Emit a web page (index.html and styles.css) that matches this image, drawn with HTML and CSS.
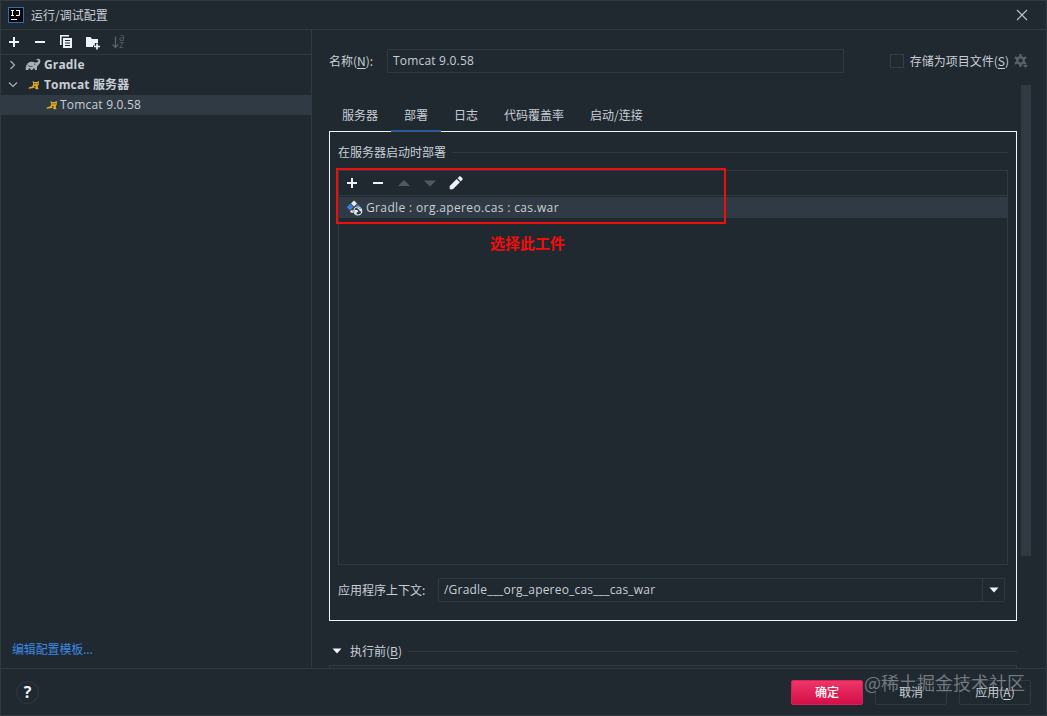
FILE: index.html
```html
<!DOCTYPE html>
<html lang="zh-CN">

<head>
    <meta charset="UTF-8">
    <meta name="viewport" content="width=device-width, initial-scale=1.0">
    <title>运行/调试配置</title>
    <link rel="stylesheet" href="styles.css">
</head>

<body>
    <div class="dialog">
        <header class="titlebar">
            <svg class="logo" width="16" height="16" viewBox="0 0 16 16">
                <rect x="0.5" y="0.5" width="15" height="15" fill="#050505" stroke="#2b6fc2"/>
                <path d="M3 3.5h3M4.5 3.5v5M3 8.5h3M8 3.5h3.5v4q0 1-1 1H8M3 12.5h6" fill="none" stroke="#fff" stroke-width="1.1"/>
            </svg>
            <span class="title">运行/调试配置</span>
            <svg class="close" width="12" height="12" viewBox="0 0 12 12">
                <path d="M1 1l10 10M11 1L1 11" stroke="#bfc3c8" stroke-width="1.1"/>
            </svg>
        </header>

        <div class="main">
            <!-- Configuration tree -->
            <aside class="sidebar">
                <div class="toolbar">
                    <svg width="16" height="16" viewBox="0 0 16 16"><path d="M8 3v10M3 8h10" stroke="#eef3fa" stroke-width="2"/></svg>
                    <svg width="16" height="16" viewBox="0 0 16 16"><path d="M3 8h10" stroke="#eef3fa" stroke-width="2"/></svg>
                    <svg width="16" height="16" viewBox="0 0 16 16">
                        <path d="M2.800 11V1.800H11" fill="none" stroke="#eef3fa" stroke-width="1.600"/>
                        <path d="M5 4h9v10H5z" fill="#eef3fa"/>
                        <path d="M7 6.500h5M7 9h5M7 11.500h5" stroke="#202830"/>
                    </svg>
                    <svg width="16" height="16" viewBox="0 0 16 16">
                        <path d="M2 3h4.500l1.500 2h6v4h-3.200v2.500H9V13H2z" fill="#eef3fa"/>
                        <path d="M13 9.500v6M10 12.500h6" stroke="#eef3fa" stroke-width="1.700"/>
                    </svg>
                    <span class="sort">
                        <svg width="7" height="14" viewBox="0 0 7 14"><path d="M3.5 1.5v11M.7 9.5l2.8 3 2.8-3" fill="none" stroke="#59616a" stroke-width="1.3"/></svg>
                        <span class="sort-letters"><span>a</span><span>z</span></span>
                    </span>
                </div>
                <div class="tree">
                    <div class="tree-row group">
                        <svg class="arrow" width="12" height="12" viewBox="0 0 12 12"><path d="M4.500 2l4 4-4 4" fill="none" stroke="#a9afb6" stroke-width="1.2"/></svg>
                        <svg class="gradle" width="16" height="14" viewBox="0 0 16 14">
                            <path d="M.7 12C.4 8.5 1.6 5.5 4.2 4.3c2-.9 4.200-.5 6 .1 1.700.5 3-.2 3.200-1.300.1-.8-.7-1.200-1.400-.8l-.7-1C12.900.2 15.300.7 15.400 2.900c.1 2.300-1.700 3.400-2.700 4.600-.7.9-.8 2.500-.8 4.500H10c0-1.100-.5-1.800-1.200-1.800S7.600 10.900 7.600 12H5.800c0-1.100-.5-1.800-1.200-1.800S3.300 10.900 3.300 12z" fill="#abb1b8"/>
                            <path d="M2.600 6.900l2 1.600 3-.2" fill="none" stroke="#202830" stroke-width=".7"/>
                            <circle cx="9.700" cy="6.200" r=".6" fill="#202830"/>
                        </svg>
                        <span>Gradle</span>
                    </div>
                    <div class="tree-row group">
                        <svg class="arrow" width="12" height="12" viewBox="0 0 12 12"><path d="M3 3.500l4 4 4-4" fill="none" stroke="#a9afb6" stroke-width="1.2"/></svg>
                        <svg class="tomcat" width="12" height="10" viewBox="0 0 12 10">
                            <path d="M4.500 1l1.800 1.100h2.500L11 1l-.3 3.800-1 1.700.8 2.700H7.800L6.500 7.600 4.500 8.200.5 8.800 1 7.200l3-.7 1.200-2z" fill="#dca928"/>
                            <path d="M6.300 3.800h1.200M8.700 3.800h1M6 6.300l2 .8" stroke="#38290f" stroke-width=".9"/>
                        </svg>
                        <span>Tomcat 服务器</span>
                    </div>
                    <div class="tree-row child selected">
                        <svg class="tomcat" width="12" height="10" viewBox="0 0 12 10">
                            <path d="M4.500 1l1.800 1.100h2.500L11 1l-.3 3.800-1 1.700.8 2.700H7.800L6.500 7.600 4.500 8.200.5 8.800 1 7.200l3-.7 1.200-2z" fill="#dca928"/>
                            <path d="M6.300 3.800h1.200M8.700 3.800h1M6 6.300l2 .8" stroke="#38290f" stroke-width=".9"/>
                        </svg>
                        <span class="latin">Tomcat 9.0.58</span>
                    </div>
                </div>
                <a class="templates">编辑配置模板...</a>
            </aside>

            <!-- Settings of the selected configuration -->
            <section class="settings">
                <div class="name-row">
                    <label class="name-label">名称(<u>N</u>):</label>
                    <div class="field latin">Tomcat 9.0.58</div>
                    <span class="checkbox"></span>
                    <label>存储为项目文件(<u>S</u>)</label>
                    <svg class="gear" width="14" height="14" viewBox="0 0 14 14">
                        <circle cx="6.500" cy="6.500" r="3.300" fill="none" stroke="#59616a" stroke-width="2.400"/>
                        <path d="M6.500 0v2.500M6.500 10.500V13M.9 3.200L3 4.500M10 8.500l2.100 1.300M.9 9.800L3 8.500M10 4.500l2.100-1.300" stroke="#59616a" stroke-width="2.300"/>
                        <path d="M9 11h5l-2.500 3z" fill="#59616a"/>
                    </svg>
                </div>

                <nav class="tabs">
                    <span class="tab">服务器</span>
                    <span class="tab active">部署</span>
                    <span class="tab">日志</span>
                    <span class="tab">代码覆盖率</span>
                    <span class="tab">启动/连接</span>
                </nav>

                <div class="panel">
                    <div class="section-title deploy-title"><span>在服务器启动时部署</span></div>
                    <div class="artifacts">
                        <div class="toolbar">
                            <svg width="16" height="16" viewBox="0 0 16 16"><path d="M8 3v10M3 8h10" stroke="#eef3fa" stroke-width="2"/></svg>
                            <svg width="16" height="16" viewBox="0 0 16 16"><path d="M3 8h10" stroke="#eef3fa" stroke-width="2"/></svg>
                            <svg width="16" height="16" viewBox="0 0 16 16"><path d="M2 11l6-6 6 6z" fill="#515961"/></svg>
                            <svg width="16" height="16" viewBox="0 0 16 16"><path d="M2 5.500h12l-6 6z" fill="#515961"/></svg>
                            <svg width="16" height="16" viewBox="0 0 16 16">
                                <path d="M1.700 14.300v-3.200l7-7 3.200 3.200-7 7zM9.600 3.200l1.600-1.600q.8-.7 1.600 0l1.600 1.600q.7.8 0 1.600l-1.600 1.600z" fill="#eef3fa"/>
                            </svg>
                        </div>
                        <div class="artifact selected">
                            <svg width="16" height="16" viewBox="0 0 16 16">
                                <path d="M7 .5l3 3-3 3-3-3z" fill="#e8edf3"/>
                                <path d="M3.200 3.800L6.600 7.200 3.200 10.600-.2 7.200z" fill="#3b7fd6"/>
                                <path d="M10.500 4l3 2.500H8.500z" fill="#3b7fd6"/>
                                <circle cx="10.800" cy="11" r="4" fill="#303a44" stroke="#e8edf3" stroke-width="1.100"/>
                                <path d="M7.300 9.700l3 .2 1 1.500-1.500 1-.3 2.300-2-2zM10.800 7.400l3 1.600.6 2.600-1.700-.4-.6-1.700-1.600-.5z" fill="#e8edf3"/>
                                <path d="M5 9.800l1 1.500-.2 1.800L2.800 12z" fill="#e8edf3"/>
                            </svg>
                            <span>Gradle : org.apereo.cas : cas.war</span>
                        </div>
                        <div class="highlight"></div>
                        <div class="note">选择此工件</div>
                    </div>
                    <div class="context-row">
                        <label>应用程序上下文:</label>
                        <div class="combo">
                            <span class="combo-value">/Gradle___org_apereo_cas___cas_war</span>
                            <span class="combo-button"><svg width="10" height="6" viewBox="0 0 10 6"><path d="M.5.5h9L5 5.500z" fill="#f1f4fa"/></svg></span>
                        </div>
                    </div>
                </div>

                <div class="section-title before">
                    <svg width="10" height="6" viewBox="0 0 10 6"><path d="M.5.5h9L5 5.500z" fill="#f1f4fa"/></svg>
                    <span>执行前(<u>B</u>)</span>
                </div>
                <div class="before-list"></div>
                <div class="scrollbar"></div>
            </section>
        </div>

        <footer class="footer">
            <span class="help">?</span>
            <span class="button primary">确定</span>
            <span class="button">取消</span>
            <span class="button">应用(<u>A</u>)</span>
            <div class="watermark">@稀土掘金技术社区</div>
        </footer>
    </div>
</body>

</html>
```
FILE: styles.css
```css
* {
    box-sizing: border-box;
}

body {
    margin: 0;
    background-color: #202830;
    color: #c9ced5;
    font-family: "Open Sans", "Noto Sans CJK SC", sans-serif;
    font-size: 12px;
    line-height: 18px;
    white-space: nowrap;
}

svg {
    display: block;
    flex: none;
}

label,
.title,
.tab,
.section-title,
.templates,
.button {
    font-family: "Noto Sans CJK SC", sans-serif;
}

u {
    text-underline-offset: 2px;
}

.dialog {
    width: 1047px;
    height: 716px;
    display: flex;
    flex-direction: column;
    border: 1px solid #303a42;
    overflow: hidden;
}

.titlebar {
    height: 29px;
    flex: none;
    display: flex;
    align-items: center;
    padding: 0 18px 0 7px;
    border-bottom: 1px solid #303a42;
}

.title {
    margin-left: 7px;
}

.close {
    margin-left: auto;
}

.main {
    height: 638px;
    flex: none;
    display: flex;
}

.sidebar {
    width: 311px;
    flex: none;
    display: flex;
    flex-direction: column;
    border-right: 1px solid #303a42;
}

.toolbar {
    height: 25px;
    display: flex;
    align-items: center;
    gap: 10px;
    padding-left: 5px;
    border-bottom: 1px solid #303a42;
}

.sort {
    display: flex;
    align-items: center;
    margin-left: 2px;
    color: #59616a;
}

.sort-letters {
    display: flex;
    flex-direction: column;
    padding-bottom: 2px;
    font-size: 10px;
    line-height: 7px;
}

.tree-row {
    height: 20px;
    display: flex;
    align-items: center;
    padding-left: 5px;
}

.group {
    font-weight: bold;
    letter-spacing: 0.15px;
}

.gradle {
    margin: 0 3px 0 7px;
}

.group .tomcat {
    margin: 0 4px 0 10px;
}

.child {
    padding-left: 45px;
}

.child .tomcat {
    margin-right: 2px;
}

.latin {
    letter-spacing: 0.2px;
}

.selected {
    background-color: #303a44;
}

.templates {
    margin-top: auto;
    padding: 0 0 10px 11px;
    color: #3d87e0;
    letter-spacing: -0.15px;
}

.settings {
    position: relative;
    flex: 1;
    padding: 19px 29px 0 17px;
    overflow: hidden;
}

.name-row {
    height: 24px;
    display: flex;
    align-items: center;
    margin-right: -11px;
}

.name-label {
    width: 58px;
}

.field {
    width: 457px;
    height: 24px;
    padding: 2px 5px;
    border: 1px solid #303a42;
}

.checkbox {
    width: 14px;
    height: 14px;
    margin: 0 6px 0 46px;
    border: 1px solid #343e47;
}

.gear {
    margin-left: 5px;
}

.tabs {
    height: 31px;
    display: flex;
    margin-top: 27px;
}

.tab {
    height: 32px;
    padding: 6px 13px 0;
}

.active {
    position: relative;
    z-index: 1;
    border-bottom: 2px solid #2c5a98;
}

.panel {
    height: 490px;
    padding: 11px 8px 0;
    border: 1px solid #f1f5fa;
}

.section-title {
    display: flex;
    align-items: center;
}

.section-title::after {
    content: "";
    flex: 1;
    height: 1px;
    margin-left: 6px;
    background-color: #303a42;
}

.artifacts {
    position: relative;
    height: 395px;
    margin-top: 9px;
    border: 1px solid #303a42;
}

.artifact {
    height: 21px;
    display: flex;
    align-items: center;
    gap: 3px;
    margin-top: 1px;
    padding-left: 8px;
    letter-spacing: 0.36px;
}

/* Annotation over the artifact list */
.highlight {
    position: absolute;
    top: -3px;
    left: -3px;
    width: 390px;
    height: 56px;
    border: 2px solid #f20d0d;
}

.note {
    position: absolute;
    top: 62px;
    left: 151px;
    color: #f20d0d;
    font: bold 15px/20px "Noto Sans CJK SC", sans-serif;
}

.context-row {
    display: flex;
    align-items: center;
    margin-top: 13px;
}

.context-row label {
    width: 100px;
}

.combo {
    width: 567px;
    height: 24px;
    display: flex;
    border: 1px solid #303a42;
    border-radius: 2px;
}

.combo-value {
    flex: 1;
    padding: 2px 5px;
    letter-spacing: 0.2px;
}

.combo-button {
    width: 22px;
    display: flex;
    align-items: center;
    justify-content: center;
    border-left: 1px solid #303a42;
}

.before {
    margin-top: 21px;
    padding-left: 3px;
}

.before svg {
    margin-right: 8px;
}

.before-list {
    height: 10px;
    margin-top: 5px;
    border: 1px solid #303a42;
}

.scrollbar {
    position: absolute;
    top: 55px;
    right: 15px;
    width: 10px;
    height: 471px;
    background-color: #303a43;
}

.footer {
    position: relative;
    flex: 1;
    display: flex;
    align-items: center;
    gap: 12px;
    padding: 0 15px;
    border-top: 1px solid #303a42;
}

.help {
    width: 23px;
    height: 23px;
    margin-right: auto;
    border: 1px solid #303a42;
    border-radius: 50%;
    color: #eef3fa;
    font-size: 16px;
    font-weight: bold;
    line-height: 20px;
    text-align: center;
}

.button {
    width: 72px;
    height: 25px;
    border: 1px solid #303a42;
    border-radius: 2px;
    line-height: 22px;
    text-align: center;
}

.primary {
    border-color: #de1f55;
    background: linear-gradient(#ee3667, #d30f49);
    color: #fff;
    font-weight: 500;
}

.watermark {
    position: absolute;
    top: 0;
    right: 21px;
    color: rgba(170, 176, 182, 0.6);
    font: 18px/26px "Noto Sans CJK SC", sans-serif;
}
```
